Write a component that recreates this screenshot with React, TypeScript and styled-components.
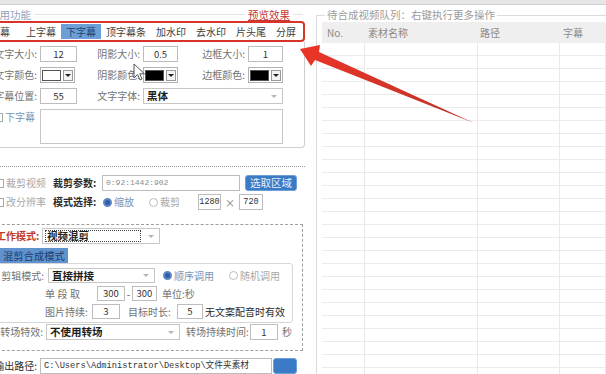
import React from 'react';
import styled, { createGlobalStyle } from 'styled-components';

const GlobalStyle = createGlobalStyle`
  html, body { margin: 0; padding: 0; background: #fff; }
  body {
    width: 606px;
    height: 374px;
    overflow: hidden;
    font-family: "Noto Sans CJK SC", "Noto Sans", sans-serif;
    font-size: 10px;
    color: #6e6e6e;
  }
  * { box-sizing: border-box; }
`;

const tones = {
  normal: '#727272',
  dark: '#2b2b2b',
  red: '#c23a2c',
  disabled: '#a8a8a8',
  blue: '#7a93b6',
};
type Tone = keyof typeof tones;

const Window = styled.div`
  position: relative;
  width: 606px;
  height: 374px;
  overflow: hidden;
  background: #fff;
`;

const TopStrip = styled.div`
  height: 5px;
  background: #e6e6e6;
  border-bottom: 1px solid #d0d0d0;
`;

const Body = styled.div`
  display: flex;
  height: 369px;
`;

/* ---------- left column ---------- */

const LeftColumn = styled.div`
  flex-shrink: 0;
  width: 319px;
  margin-left: -13px;
  display: flex;
  flex-direction: column;
`;

const LegendRow = styled.div`
  display: flex;
  align-items: center;
  height: 13px;
  margin-top: 3px;
  padding-left: 2px;
  font-size: 10.5px;
  line-height: 13px;
`;

const LegendText = styled.span`
  color: #8fa3bc;
  white-space: nowrap;
`;

const LegendLine = styled.div<{ $w?: number }>`
  ${p => (p.$w ? `width: ${p.$w}px;` : 'flex: 1;')}
  margin: 0 3px;
  border-top: 1px solid #e3e3e3;
`;

const PreviewLink = styled.span`
  color: #c8372d;
  text-decoration: underline;
  white-space: nowrap;
`;

const TabFrame = styled.div`
  display: flex;
  align-items: center;
  height: 25px;
  margin: 0 1px 0 -4px;
  border: 2px solid #d8342a;
  border-radius: 4px;
`;

const Tab = styled.div<{ $active?: boolean }>`
  height: 15px;
  padding: 0 5px;
  line-height: 15px;
  font-size: 10px;
  white-space: nowrap;
  color: ${p => (p.$active ? '#1f3f6e' : '#3d3d3d')};
  background: ${p => (p.$active ? '#6c9fd8' : 'transparent')};
  &:first-child { margin-right: 6px; }
`;

const TabPanel = styled.div`
  display: grid;
  grid-template-columns: 52px 37px 66px 35px 70px 35px;
  grid-template-rows: 16px 16px 16px 35px;
  row-gap: 5px;
  align-items: center;
  margin-right: 1px;
  padding: 4px 0 3px;
  border: 1px solid #cfcfcf;
  border-top: none;
  border-radius: 0 0 4px 4px;
`;

const Label = styled.span<{ $w?: number; $right?: boolean; $tone?: Tone; $bold?: boolean; $ml?: number; $spaced?: boolean }>`
  flex-shrink: 0;
  ${p => (p.$w !== undefined ? `width: ${p.$w}px;` : '')}
  margin-left: ${p => p.$ml ?? 0}px;
  ${p => (p.$right ? 'text-align: right; padding-right: 3px;' : '')}
  ${p => (p.$spaced ? 'letter-spacing: 2.5px;' : '')}
  color: ${p => tones[p.$tone ?? 'normal']};
  font-weight: ${p => (p.$bold ? 700 : 400)};
  font-size: 10px;
  line-height: 14px;
  white-space: nowrap;
`;

const TextBox = styled.div<{ $w?: number; $h?: number; $ml?: number; $left?: boolean; $mono?: number; $faint?: boolean }>`
  flex-shrink: 0;
  ${p => (p.$w ? `width: ${p.$w}px;` : '')}
  height: ${p => p.$h ?? 16}px;
  margin-left: ${p => p.$ml ?? 0}px;
  padding: 0 ${p => (p.$left ? 3 : 0)}px;
  border: 1px solid #bdbdbd;
  background: #fff;
  color: ${p => (p.$faint ? '#8c8c8c' : '#333')};
  font-family: ${p => (p.$mono ? '"Liberation Mono", "Noto Sans CJK SC", monospace' : 'inherit')};
  font-size: ${p => p.$mono ?? 9.5}px;
  line-height: ${p => (p.$h ?? 16) - 2}px;
  text-align: ${p => (p.$left ? 'left' : 'center')};
  white-space: nowrap;
  overflow: hidden;
`;

const TextArea = styled.div`
  grid-column: 2 / 7;
  height: 35px;
  border: 1px solid #c6c6c6;
  background: #fff;
`;

const ColorPicker = styled.div`
  display: flex;
  align-items: center;
  gap: 2px;
  width: 35px;
  height: 16px;
  padding: 0 1px;
  border: 1px solid #b3b3b3;
  background: #fff;
`;

const Swatch = styled.div<{ $color: string }>`
  width: 19px;
  height: 11px;
  border: 1px solid #555;
  background: ${p => p.$color};
`;

const DropButton = styled.div`
  display: flex;
  align-items: center;
  justify-content: center;
  width: 10px;
  height: 11px;
  border: 1px solid #9a9a9a;
  background: #f3f3f3;
`;

const Caret = styled.span<{ $light?: boolean }>`
  width: 0;
  height: 0;
  border-left: 3px solid transparent;
  border-right: 3px solid transparent;
  border-top: 3px solid ${p => (p.$light ? '#b4b4b4' : '#222')};
`;

const Select = styled.div<{ $w?: number; $h?: number; $ml?: number }>`
  flex-shrink: 0;
  display: flex;
  align-items: center;
  ${p => (p.$w ? `width: ${p.$w}px;` : '')}
  height: ${p => p.$h ?? 16}px;
  margin-left: ${p => p.$ml ?? 0}px;
  padding: 1px 5px 1px 2px;
  border: 1px solid #c6c6c6;
  background: #fff;
`;

const SelectValue = styled.span<{ $focus?: boolean }>`
  flex: 1;
  align-self: stretch;
  padding-left: 1px;
  font-size: 10.5px;
  line-height: 11px;
  font-weight: 700;
  color: #1e1e1e;
  white-space: nowrap;
  ${p => (p.$focus ? 'border: 1px dotted #444; margin-right: 7px; line-height: 10px;' : '')}
`;

const CheckRow = styled.div`
  display: flex;
  align-items: center;
  gap: 2px;
  align-self: start;
  margin-top: 1px;
  padding-left: 6px;
`;

const CheckBox = styled.span`
  flex-shrink: 0;
  width: 9px;
  height: 9px;
  border: 1px solid #a9a9a9;
  background: #fff;
`;

const DottedRule = styled.div`
  margin: 18px 1px 0 0;
  border-top: 1px dotted #9c9c9c;
`;

const FormRow = styled.div<{ $mt?: number; $pl?: number; $h?: number }>`
  display: flex;
  align-items: center;
  height: ${p => p.$h ?? 16}px;
  margin-top: ${p => p.$mt ?? 0}px;
  padding-left: ${p => p.$pl ?? 0}px;
`;

const CheckItem = styled.div<{ $w: number }>`
  flex-shrink: 0;
  display: flex;
  align-items: center;
  gap: 2px;
  width: ${p => p.$w}px;
`;

const RadioItem = styled.div<{ $w?: number; $ml?: number }>`
  flex-shrink: 0;
  display: flex;
  align-items: center;
  gap: 2px;
  ${p => (p.$w ? `width: ${p.$w}px;` : '')}
  margin-left: ${p => p.$ml ?? 0}px;
`;

const RadioDot = styled.span<{ $on?: boolean }>`
  flex-shrink: 0;
  width: 9px;
  height: 9px;
  border-radius: 50%;
  border: ${p => (p.$on ? '2px solid #5d86c4' : '1px solid #bdbdbd')};
  background: ${p => (p.$on ? '#2f5ea8' : '#fff')};
`;

const BlueButton = styled.div<{ $w: number; $ml?: number }>`
  flex-shrink: 0;
  width: ${p => p.$w}px;
  height: 16px;
  margin-left: ${p => p.$ml ?? 0}px;
  border: 1px solid #6d9fd8;
  border-radius: 3px;
  background: #3b7bc6;
  color: #e9f0fa;
  font-size: 10.5px;
  line-height: 14px;
  text-align: center;
  white-space: nowrap;
`;

const Times = styled.span`
  flex-shrink: 0;
  width: 18px;
  text-align: center;
  color: #777;
  font-size: 10px;
`;

const Dash = styled.span`
  flex-shrink: 0;
  width: 7px;
  text-align: center;
  color: #555;
  font-size: 10px;
`;

const DashedBox = styled.div`
  display: flex;
  flex-direction: column;
  margin: 14px 3px 0 0;
  padding: 3px 0 10px;
  border: 1px dashed #9e9e9e;
`;

const ModeTab = styled.div`
  align-self: flex-start;
  height: 15px;
  margin-top: 4px;
  padding: 0 3px 0 15px;
  background: #6092cd;
  color: #1c3d6d;
  font-size: 10.3px;
  line-height: 15px;
  white-space: nowrap;
`;

const InnerPanel = styled.div`
  display: flex;
  flex-direction: column;
  gap: 3px;
  margin-right: 9px;
  padding: 4px 0 3px;
  border: 1px solid #d6d6d6;
  border-radius: 0 3px 3px 3px;
`;

/* ---------- right column ---------- */

const RightColumn = styled.div`
  flex: 1;
  min-width: 0;
  padding-left: 10px;
`;

const QueueBox = styled.fieldset`
  min-width: 0;
  height: 420px;
  margin: 4px 0 0;
  padding: 1px 0 0 5px;
  border: 1px solid #dcdcdc;
  border-right: none;
  overflow: hidden;
`;

const QueueLegend = styled.legend`
  margin-left: 3px;
  padding: 0 2px;
  color: #9c9c9c;
  font-size: 10.5px;
  line-height: 12px;
`;

const QueueGrid = styled.div`
  display: grid;
  grid-template-columns: 42px 113px 82px 46px 60px;
  width: 343px;
`;

const HeadCell = styled.div<{ $pad: number }>`
  height: 21px;
  padding-left: ${p => p.$pad}px;
  background: #efefef;
  color: #8a8a8a;
  font-size: 10px;
  line-height: 21px;
  white-space: nowrap;
`;

const Cell = styled.div<{ $first?: boolean }>`
  height: 13px;
  border-bottom: 1px solid #ebebeb;
  border-left: ${p => (p.$first ? 'none' : '1px solid #e9e9e9')};
`;

/* ---------- overlays ---------- */

const Overlay = styled.svg`
  position: absolute;
  left: 0;
  top: 0;
  pointer-events: none;
`;

const CursorMark = styled.svg`
  position: absolute;
  left: 133px;
  top: 63px;
  pointer-events: none;
`;

const tabs = ['字幕', '上字幕', '下字幕', '顶字幕条', '加水印', '去水印', '片头尾', '分屏'];
const columns = [
  { title: 'No.', pad: 5 },
  { title: '素材名称', pad: 4 },
  { title: '路径', pad: 3 },
  { title: '字幕', pad: 4 },
  { title: '操作', pad: 2 },
];
const rowCount = 26;

export default function App() {
  return (
    <Window>
      <GlobalStyle />
      <TopStrip />
      <Body>
        <LeftColumn>
          <LegendRow>
            <LegendText>常用功能</LegendText>
            <LegendLine />
            <PreviewLink>预览效果</PreviewLink>
            <LegendLine $w={10} />
          </LegendRow>

          <TabFrame>
            {tabs.map(t => (
              <Tab key={t} $active={t === '下字幕'}>{t}</Tab>
            ))}
          </TabFrame>

          <TabPanel>
            <Label $right>文字大小:</Label>
            <TextBox>12</TextBox>
            <Label $right>阴影大小:</Label>
            <TextBox>0.5</TextBox>
            <Label $right>边框大小:</Label>
            <TextBox>1</TextBox>

            <Label $right>文字颜色:</Label>
            <ColorPicker>
              <Swatch $color="#fff" />
              <DropButton><Caret /></DropButton>
            </ColorPicker>
            <Label $right>阴影颜色:</Label>
            <ColorPicker>
              <Swatch $color="#000" />
              <DropButton><Caret /></DropButton>
            </ColorPicker>
            <Label $right>边框颜色:</Label>
            <ColorPicker>
              <Swatch $color="#000" />
              <DropButton><Caret /></DropButton>
            </ColorPicker>

            <Label $right>字幕位置:</Label>
            <TextBox>55</TextBox>
            <Label $right>文字字体:</Label>
            <Select style={{ gridColumn: '4 / 7' }}>
              <SelectValue>黑体</SelectValue>
              <Caret $light />
            </Select>

            <CheckRow>
              <CheckBox />
              <Label $tone="blue">下字幕</Label>
            </CheckRow>
            <TextArea />
          </TabPanel>

          <DottedRule />

          <FormRow $mt={8} $pl={8}>
            <CheckItem $w={58}>
              <CheckBox />
              <Label $tone="disabled">裁剪视频</Label>
            </CheckItem>
            <Label $w={49} $bold $tone="dark">裁剪参数:</Label>
            <TextBox $w={138} $left $mono={8} $faint>0:92:1442:902</TextBox>
            <BlueButton $w={52} $ml={5}>选取区域</BlueButton>
          </FormRow>

          <FormRow $mt={3} $pl={8}>
            <CheckItem $w={58}>
              <CheckBox />
              <Label $tone="disabled">改分辨率</Label>
            </CheckItem>
            <Label $w={49} $bold $tone="dark">模式选择:</Label>
            <RadioItem $w={46} $ml={1}>
              <RadioDot $on />
              <Label $tone="blue">缩放</Label>
            </RadioItem>
            <RadioItem $w={49}>
              <RadioDot />
              <Label $tone="disabled">裁剪</Label>
            </RadioItem>
            <TextBox $w={23} $mono={8.5}>1280</TextBox>
            <Times>×</Times>
            <TextBox $w={24} $mono={8.5}>720</TextBox>
          </FormRow>

          <DashedBox>
            <FormRow $pl={8}>
              <Label $w={46} $bold $tone="red">工作模式:</Label>
              <Select $w={118}>
                <SelectValue $focus>视频混剪</SelectValue>
                <Caret $light />
              </Select>
            </FormRow>

            <ModeTab>混剪合成模式</ModeTab>

            <InnerPanel>
              <FormRow $h={15}>
                <Label $w={58} $right>剪辑模式:</Label>
                <Select $w={107} $h={15} $ml={1}>
                  <SelectValue>直接拼接</SelectValue>
                  <Caret $light />
                </Select>
                <RadioItem $ml={8}>
                  <RadioDot $on />
                  <Label $tone="blue">顺序调用</Label>
                </RadioItem>
                <RadioItem $ml={15}>
                  <RadioDot />
                  <Label $tone="disabled">随机调用</Label>
                </RadioItem>
              </FormRow>

              <FormRow $h={15} $pl={56}>
                <Label $w={52} $spaced>单段取</Label>
                <TextBox $w={28} $h={15}>300</TextBox>
                <Dash>-</Dash>
                <TextBox $w={25} $h={15}>300</TextBox>
                <Label $ml={5}>单位:秒</Label>
              </FormRow>

              <FormRow $h={15} $pl={56}>
                <Label $w={47}>图片持续:</Label>
                <TextBox $w={28} $h={15}>3</TextBox>
                <Label $w={49} $ml={8}>目标时长:</Label>
                <TextBox $w={26} $h={15}>5</TextBox>
                <Label $ml={2} $tone="dark">无文案配音时有效</Label>
              </FormRow>
            </InnerPanel>

            <FormRow $mt={1}>
              <Label $w={58} $right>转场特效:</Label>
              <Select $w={134}>
                <SelectValue>不使用转场</SelectValue>
                <Caret $light />
              </Select>
              <Label $w={64} $ml={6}>转场持续时间:</Label>
              <TextBox $w={28}>1</TextBox>
              <Label $ml={4}>秒</Label>
            </FormRow>
          </DashedBox>

          <FormRow $mt={7}>
            <Label $w={53} $right $tone="dark">输出路径:</Label>
            <TextBox $w={232} $left $mono={8.7}>C:\Users\Administrator\Desktop\文件夹素材</TextBox>
            <BlueButton $w={24} $ml={1} />
          </FormRow>
        </LeftColumn>

        <RightColumn>
          <QueueBox>
            <QueueLegend>待合成视频队列：右键执行更多操作</QueueLegend>
            <QueueGrid>
              {columns.map(c => (
                <HeadCell key={c.title} $pad={c.pad}>{c.title}</HeadCell>
              ))}
              {Array.from({ length: rowCount }).flatMap((_, r) =>
                columns.map((c, i) => <Cell key={`${r}-${c.title}`} $first={i === 0} />)
              )}
            </QueueGrid>
          </QueueBox>
        </RightColumn>
      </Body>

      <Overlay width="606" height="374" viewBox="0 0 606 374">
        <defs>
          <linearGradient id="arrowFill" x1="300" y1="49" x2="474" y2="123" gradientUnits="userSpaceOnUse">
            <stop offset="0" stopColor="#ec3426" />
            <stop offset="1" stopColor="#b8352c" />
          </linearGradient>
        </defs>
        <polygon points="300,49 320,45 319,52 474,123 315,60 311,66" fill="url(#arrowFill)" />
      </Overlay>

      <CursorMark width="13" height="19" viewBox="0 0 13 19">
        <path d="M1 1 L1 15 L4.5 11.5 L7 17 L9 16 L6.8 10.8 L11.5 10.8 Z" fill="#fff" stroke="#555" strokeWidth="1" strokeLinejoin="round" />
      </CursorMark>
    </Window>
  );
}
